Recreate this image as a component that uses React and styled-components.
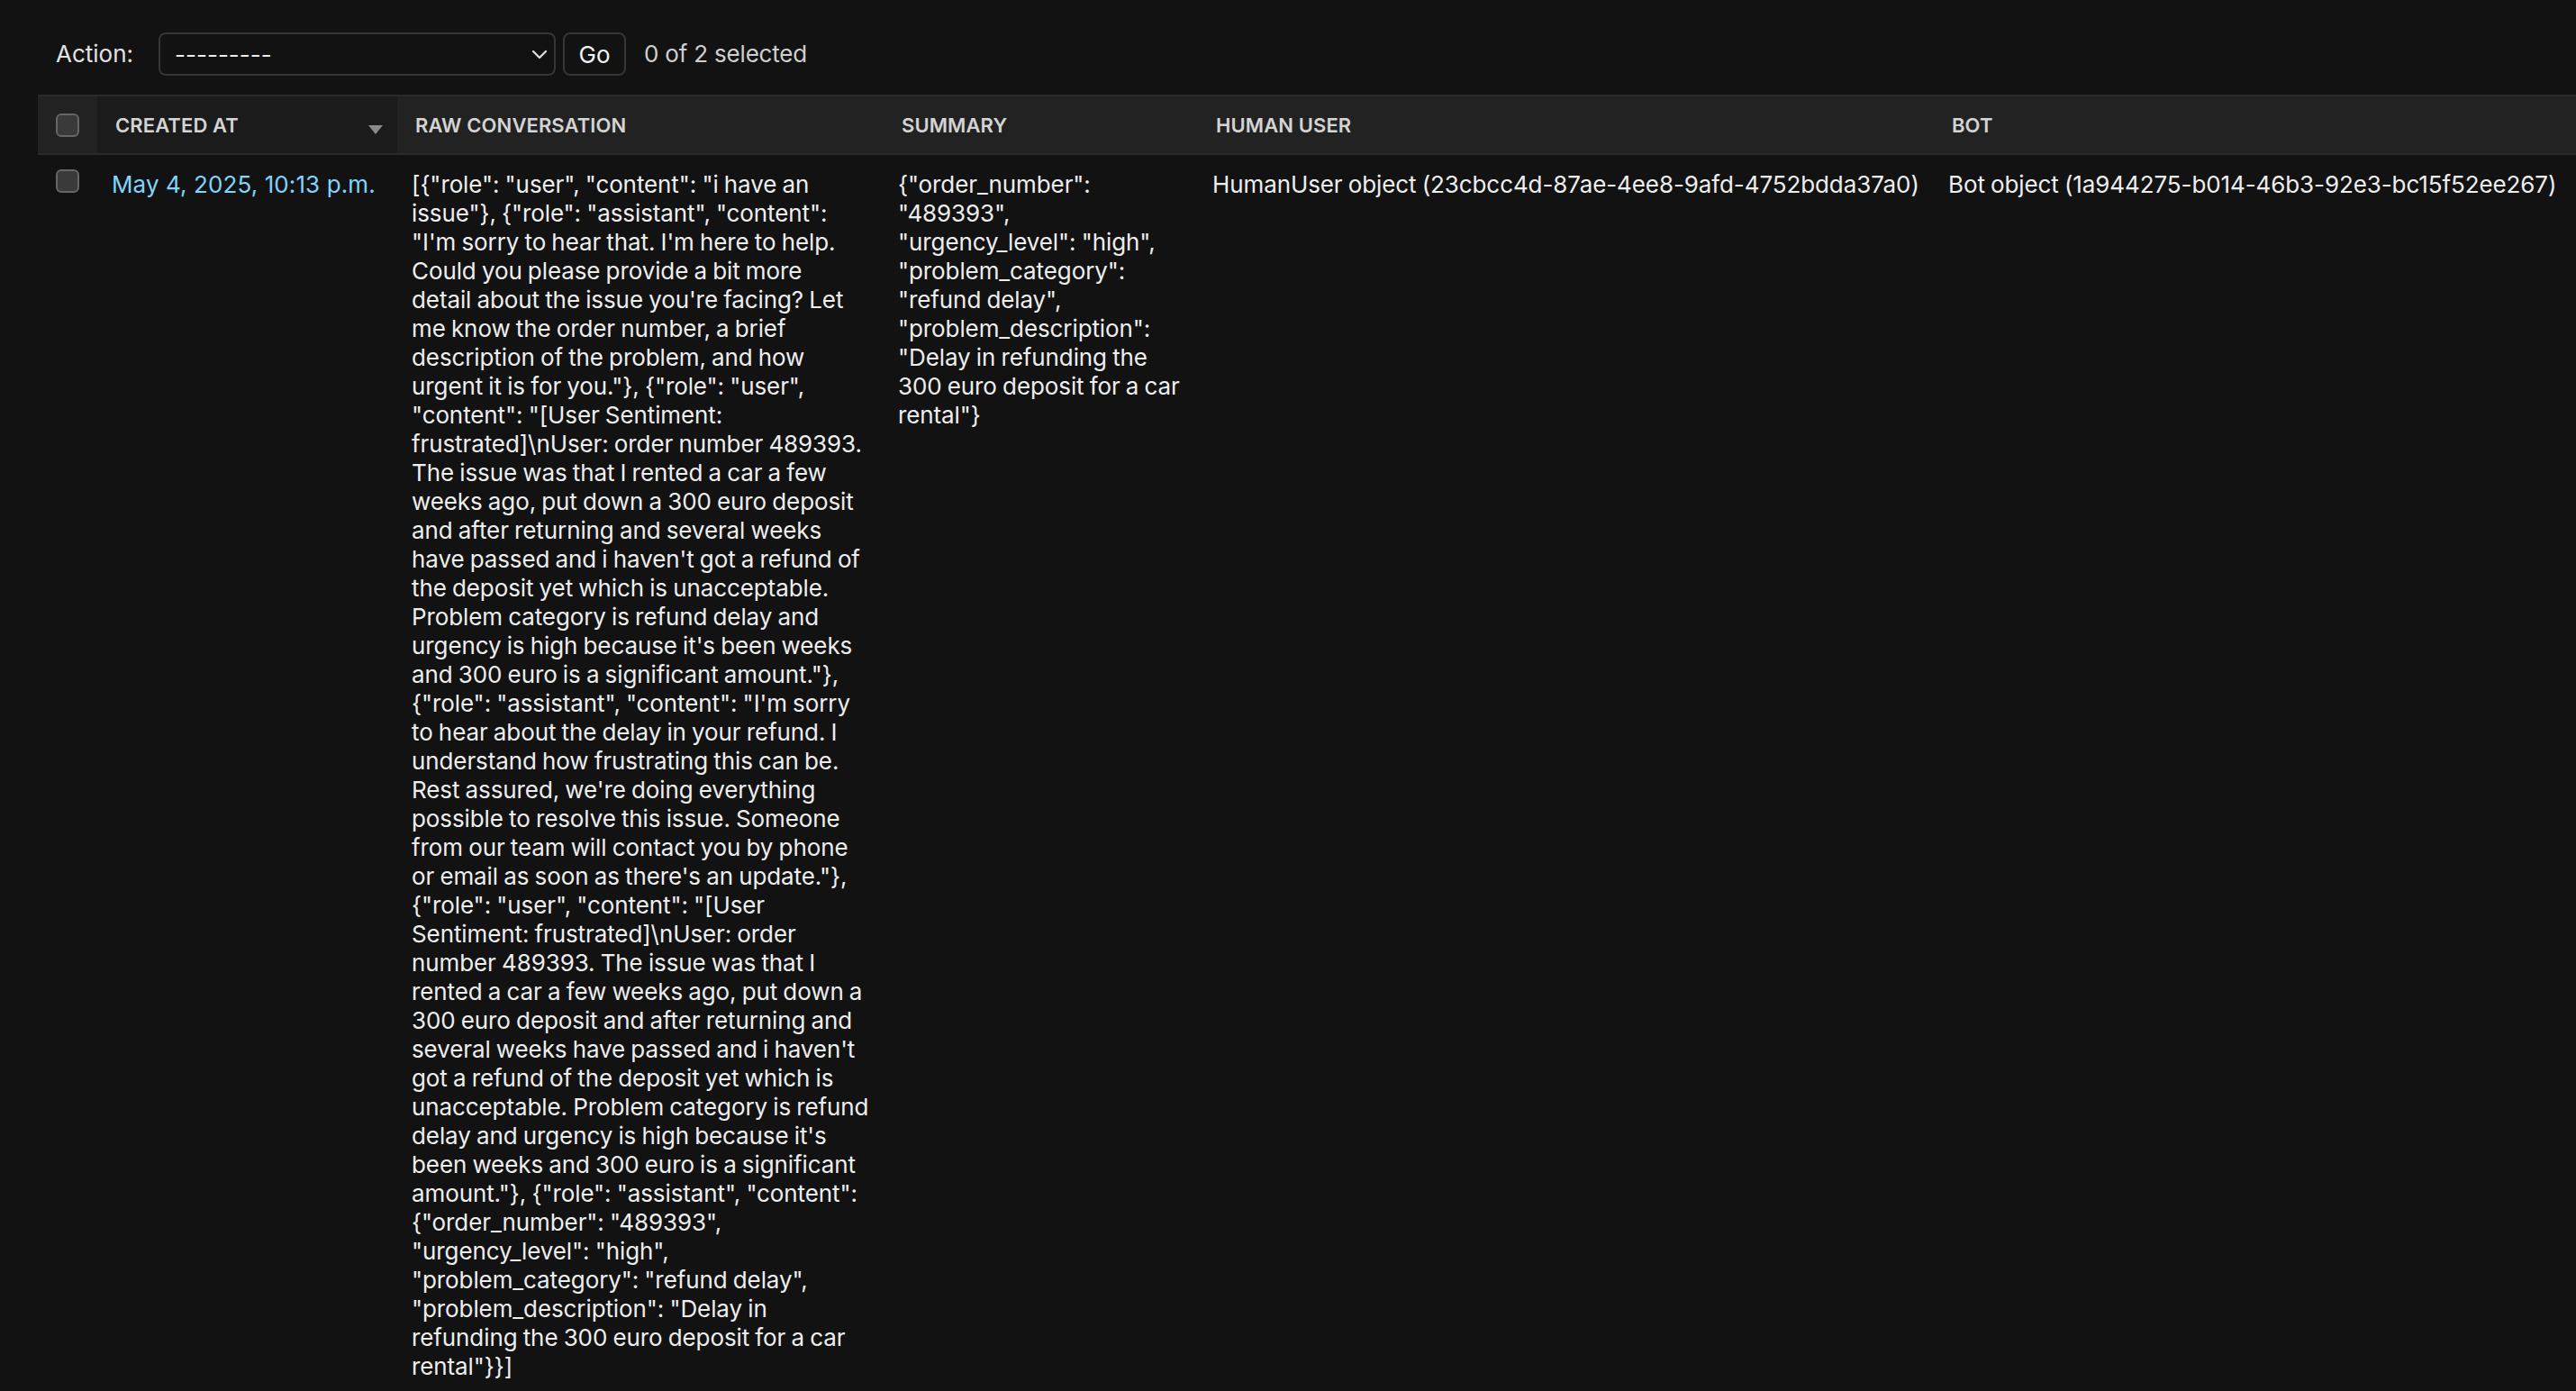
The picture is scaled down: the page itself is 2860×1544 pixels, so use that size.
import styled, { createGlobalStyle } from "styled-components";

const GlobalStyle = createGlobalStyle`
    html, body {
        margin: 0;
        padding: 0;
        background: #121212;
        overflow: hidden;
    }
    body {
        font-family: Inter, "Noto Sans", "Liberation Sans", sans-serif;
        color: #eeeeee;
    }
`;

const Page = styled.div`
    padding: 17px 0 0 42px;
    width: 2860px;
    box-sizing: border-box;
`;

const Actions = styled.div`
    display: flex;
    align-items: center;
    padding: 19px 20px 21px 20px;
    font-size: 26px;
    line-height: 48px;
    color: #e2e2e2;
`;

const Label = styled.label`
    margin-right: 28px;
`;

const SelectWrap = styled.div`
    position: relative;
    width: 441px;
    height: 48px;
`;

const Select = styled.select`
    appearance: none;
    width: 100%;
    height: 100%;
    box-sizing: border-box;
    background: #121212;
    border: 2px solid #353535;
    border-radius: 8px;
    color: #eeeeee;
    font-family: inherit;
    font-size: 26px;
    padding: 0 16px;
`;

const Chevron = styled.svg`
    position: absolute;
    right: 8px;
    top: 19px;
    pointer-events: none;
`;

const GoButton = styled.button`
    margin-left: 8px;
    width: 70px;
    height: 48px;
    box-sizing: border-box;
    background: #121212;
    border: 2px solid #353535;
    border-radius: 8px;
    color: #f2f2f2;
    font-family: inherit;
    font-size: 26px;
    padding: 0;
`;

const Counter = styled.span`
    margin-left: 20px;
    color: #cfcfcf;
    letter-spacing: -0.2px;
`;

const Table = styled.table`
    border-collapse: collapse;
    table-layout: fixed;
    width: 2818px;
`;

const HeadCell = styled.th`
    background: ${(p) => (p.$sorted ? "#1b1b1b" : "#222222")};
    border-top: 2px solid #2a2a2a;
    border-bottom: 2px solid #2a2a2a;
    height: 63px;
    padding: 0 0 0 20px;
    text-align: left;
    vertical-align: middle;
    font-size: 22px;
    font-weight: 600;
    letter-spacing: 0.1px;
    text-transform: uppercase;
    color: #d4d4d4;
    white-space: nowrap;
    position: relative;
`;

const SortArrow = styled.svg`
    position: absolute;
    right: 16px;
    top: 32px;
`;

const Cell = styled.td`
    padding: 17px 16px 16px 16px;
    vertical-align: top;
    font-size: 26px;
    line-height: 32px;
    letter-spacing: ${(p) => (p.$link ? "0.1px" : "-0.1px")};
    word-spacing: ${(p) => (p.$link ? "0" : "-1px")};
    color: ${(p) => (p.$link ? "#81d4fa" : "#eeeeee")};
    white-space: ${(p) => (p.$lines ? "pre" : "nowrap")};
`;

const CheckCell = styled.td`
    padding: 16px 0 0 20px;
    vertical-align: top;
`;

const Check = styled.span`
    display: block;
    width: 26px;
    height: 26px;
    box-sizing: border-box;
    border: 2px solid #666666;
    border-radius: 6px;
    background: #3a3a3a;
`;

const rawConversation = [
    '[{"role": "user", "content": "i have an',
    'issue"}, {"role": "assistant", "content":',
    '"I\'m sorry to hear that. I\'m here to help.',
    "Could you please provide a bit more",
    "detail about the issue you're facing? Let",
    "me know the order number, a brief",
    "description of the problem, and how",
    'urgent it is for you."}, {"role": "user",',
    '"content": "[User Sentiment:',
    "frustrated]\\nUser: order number 489393.",
    "The issue was that I rented a car a few",
    "weeks ago, put down a 300 euro deposit",
    "and after returning and several weeks",
    "have passed and i haven't got a refund of",
    "the deposit yet which is unacceptable.",
    "Problem category is refund delay and",
    "urgency is high because it's been weeks",
    'and 300 euro is a significant amount."},',
    '{"role": "assistant", "content": "I\'m sorry',
    "to hear about the delay in your refund. I",
    "understand how frustrating this can be.",
    "Rest assured, we're doing everything",
    "possible to resolve this issue. Someone",
    "from our team will contact you by phone",
    'or email as soon as there\'s an update."},',
    '{"role": "user", "content": "[User',
    "Sentiment: frustrated]\\nUser: order",
    "number 489393. The issue was that I",
    "rented a car a few weeks ago, put down a",
    "300 euro deposit and after returning and",
    "several weeks have passed and i haven't",
    "got a refund of the deposit yet which is",
    "unacceptable. Problem category is refund",
    "delay and urgency is high because it's",
    "been weeks and 300 euro is a significant",
    'amount."}, {"role": "assistant", "content":',
    '{"order_number": "489393",',
    '"urgency_level": "high",',
    '"problem_category": "refund delay",',
    '"problem_description": "Delay in',
    "refunding the 300 euro deposit for a car",
    'rental"}}]',
].join("\n");

const summary = [
    '{"order_number":',
    '"489393",',
    '"urgency_level": "high",',
    '"problem_category":',
    '"refund delay",',
    '"problem_description":',
    '"Delay in refunding the',
    "300 euro deposit for a car",
    'rental"}',
].join("\n");

const columns = [
    { key: "check", width: 66, check: true },
    { key: "created", label: "Created at", width: 333, sorted: true },
    { key: "raw", label: "Raw conversation", width: 540 },
    { key: "summary", label: "Summary", width: 349 },
    { key: "human", label: "Human user", width: 817 },
    { key: "bot", label: "Bot", width: 713 },
];

export default function App() {
    return (
        <>
            <GlobalStyle />
            <Page>
                <Actions>
                    <Label>Action:</Label>
                    <SelectWrap>
                        <Select defaultValue="">
                            <option value="">---------</option>
                            <option value="delete">Delete selected conversations</option>
                        </Select>
                        <Chevron width="20" height="12" viewBox="0 0 20 12">
                            <path d="M3 2 L10 9 L17 2" fill="none" stroke="#e0e0e0" strokeWidth="2.2" strokeLinecap="round" strokeLinejoin="round" />
                        </Chevron>
                    </SelectWrap>
                    <GoButton>Go</GoButton>
                    <Counter>0 of 2 selected</Counter>
                </Actions>
                <Table>
                    <colgroup>
                        {columns.map((c) => (
                            <col key={c.key} style={{ width: `${c.width}px` }} />
                        ))}
                    </colgroup>
                    <thead>
                        <tr>
                            {columns.map((c) => (
                                <HeadCell key={c.key} $sorted={c.sorted}>
                                    {c.check ? <Check /> : c.label}
                                    {c.sorted && (
                                        <SortArrow width="16" height="10" viewBox="0 0 16 10">
                                            <path d="M0 0 L16 0 L8 10 Z" fill="#8a8a8a" />
                                        </SortArrow>
                                    )}
                                </HeadCell>
                            ))}
                        </tr>
                    </thead>
                    <tbody>
                        <tr>
                            <CheckCell>
                                <Check />
                            </CheckCell>
                            <Cell $link>May 4, 2025, 10:13 p.m.</Cell>
                            <Cell $lines>{rawConversation}</Cell>
                            <Cell $lines>{summary}</Cell>
                            <Cell>HumanUser object (23cbcc4d-87ae-4ee8-9afd-4752bdda37a0)</Cell>
                            <Cell>Bot object (1a944275-b014-46b3-92e3-bc15f52ee267)</Cell>
                        </tr>
                    </tbody>
                </Table>
            </Page>
        </>
    );
}
